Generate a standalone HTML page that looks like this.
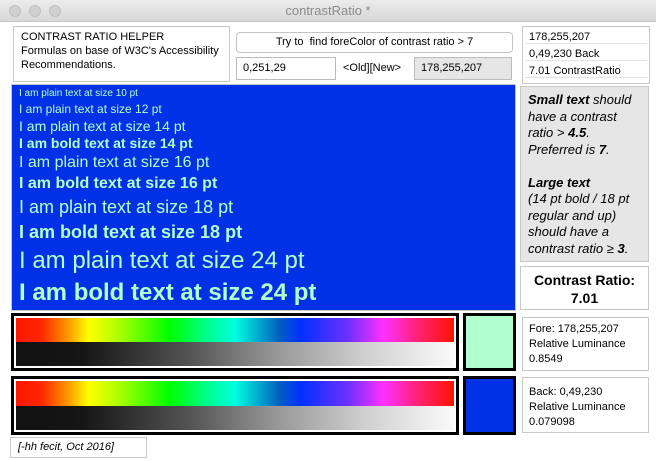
<!DOCTYPE html>
<html><head><style>
*{margin:0;padding:0;box-sizing:border-box}
body{width:656px;height:461px;background:#fff;font-family:"Liberation Sans",sans-serif;position:relative;overflow:hidden;color:#000}
.a{position:absolute}
.bx{position:absolute;border:1px solid #c8c8c8;background:#fff}
.t{position:absolute;white-space:nowrap}
.bl{color:#b2ffcf;position:absolute;left:19px;white-space:nowrap}
.rb{background:linear-gradient(to right,#ff1400 0%,#ff2a00 6%,#ff9a00 12%,#ffff00 16.5%,#c0ff00 22%,#00ff00 35%,#00ffa0 45%,#00ffe0 50%,#0060c0 60%,#0030ff 65%,#7030ff 76%,#ff30ff 84%,#ff2070 92%,#ff1400 100%)}
.gr{background:linear-gradient(to right,#111 0%,#151515 15%,#555 40%,#999 60%,#d0d0d0 80%,#fafafa 100%)}
</style></head><body>
<div class="a" style="left:0;top:0;width:656px;height:22px;background:linear-gradient(#ececec,#d8d8d8);border-bottom:1px solid #c4c4c4"></div>
<div class="a" style="left:9px;top:5px;width:12px;height:12px;border-radius:6px;background:#d0d0d0;border:1px solid #c0c0c0"></div>
<div class="a" style="left:29px;top:5px;width:12px;height:12px;border-radius:6px;background:#d0d0d0;border:1px solid #c0c0c0"></div>
<div class="a" style="left:49px;top:5px;width:12px;height:12px;border-radius:6px;background:#d0d0d0;border:1px solid #c0c0c0"></div>
<div class="t" style="left:0;width:656px;text-align:center;top:3px;font-size:13px;color:#8a8a8a">contrastRatio *</div>

<div class="bx" style="left:13px;top:26px;width:217px;height:56px"></div>
<div class="t" style="left:21px;top:30px;font-size:11px;line-height:14px">CONTRAST RATIO HELPER<br>Formulas on base of W3C's Accessibility<br>Recommendations.</div>

<div class="a" style="left:236px;top:32px;width:277px;height:21px;border:1px solid #c4c4c4;border-radius:4px;background:#fff;font-size:11px;text-align:center;line-height:19px">Try to &nbsp;find foreColor of contrast ratio &gt; 7</div>
<div class="bx" style="left:236px;top:57px;width:100px;height:23px;border-color:#bbb"></div>
<div class="t" style="left:243px;top:62px;font-size:11px">0,251,29</div>
<div class="t" style="left:343px;top:62px;font-size:11px">&lt;Old][New&gt;</div>
<div class="bx" style="left:414px;top:57px;width:98px;height:23px;background:#e6e6e6;border-color:#bbb"></div>
<div class="t" style="left:421px;top:62px;font-size:11px">178,255,207</div>

<div class="bx" style="left:522px;top:26px;width:128px;height:58px"></div>
<div class="a" style="left:525px;top:43px;width:122px;height:1px;background:#e2e2e2"></div>
<div class="a" style="left:525px;top:60px;width:122px;height:1px;background:#e2e2e2"></div>
<div class="a" style="left:525px;top:77px;width:122px;height:1px;background:#e2e2e2"></div>
<div class="t" style="left:529px;top:29px;font-size:11px;line-height:17px">178,255,207<br>0,49,230 Back<br>7.01 ContrastRatio</div>

<div class="a" style="left:11px;top:84px;width:505px;height:227px;border:1px solid #c8c8c8;background:#0031e6"></div>
<div class="bl" style="top:88px;font-size:10px">I am plain text at size 10 pt</div>
<div class="bl" style="top:102px;font-size:12px">I am plain text at size 12 pt</div>
<div class="bl" style="top:118px;font-size:14px">I am plain text at size 14 pt</div>
<div class="bl" style="top:135px;font-size:14px;font-weight:bold">I am bold text at size 14 pt</div>
<div class="bl" style="top:154px;font-size:16px">I am plain text at size 16 pt</div>
<div class="bl" style="top:175px;font-size:16px;font-weight:bold">I am bold text at size 16 pt</div>
<div class="bl" style="top:197px;font-size:18px">I am plain text at size 18 pt</div>
<div class="bl" style="top:222px;font-size:18px;font-weight:bold">I am bold text at size 18 pt</div>
<div class="bl" style="top:247px;font-size:24px">I am plain text at size 24 pt</div>
<div class="bl" style="top:279px;font-size:24px;font-weight:bold">I am bold text at size 24 pt</div>

<div class="bx" style="left:520px;top:86px;width:129px;height:176px;background:#e6e6e6"></div>
<div class="t" style="left:528px;top:92px;font-size:13px;line-height:16.5px;font-style:italic">
<b>Small text</b> should<br>have a contrast<br>ratio &gt; <b>4.5</b>.<br>Preferred is <b>7</b>.<br><br><b>Large text</b><br>(14 pt bold / 18 pt<br>regular and up)<br>should have a<br>contrast ratio ≥ <b>3</b>.</div>
<div class="bx" style="left:520px;top:266px;width:129px;height:44px"></div>
<div class="t" style="left:520px;width:129px;text-align:center;top:271px;font-size:14px;font-weight:bold;line-height:18px">Contrast Ratio:<br>7.01</div>

<div class="a" style="left:11px;top:313px;width:448px;height:58px;border:3px solid #000;background:#fff"></div>
<div class="a rb" style="left:16px;top:318px;width:438px;height:24px"></div>
<div class="a gr" style="left:16px;top:342px;width:438px;height:24px"></div>
<div class="a" style="left:463px;top:313px;width:53px;height:58px;border:3px solid #000;background:#b2ffcf"></div>
<div class="bx" style="left:522px;top:317px;width:127px;height:54px"></div>
<div class="t" style="left:529px;top:322px;font-size:11px;line-height:15px">Fore: 178,255,207<br>Relative Luminance<br>0.8549</div>

<div class="a" style="left:11px;top:376px;width:448px;height:59px;border:3px solid #000;background:#fff"></div>
<div class="a rb" style="left:16px;top:381px;width:438px;height:25px"></div>
<div class="a gr" style="left:16px;top:406px;width:438px;height:24px"></div>
<div class="a" style="left:463px;top:376px;width:53px;height:59px;border:3px solid #000;background:#0031e6"></div>
<div class="bx" style="left:522px;top:377px;width:127px;height:56px"></div>
<div class="t" style="left:529px;top:385px;font-size:11px;line-height:15px">Back: 0,49,230<br>Relative Luminance<br>0.079098</div>

<div class="bx" style="left:10px;top:437px;width:137px;height:21px"></div>
<div class="t" style="left:18px;top:441px;font-size:11px;font-style:italic">[-hh fecit, Oct 2016]</div>
</body></html>
